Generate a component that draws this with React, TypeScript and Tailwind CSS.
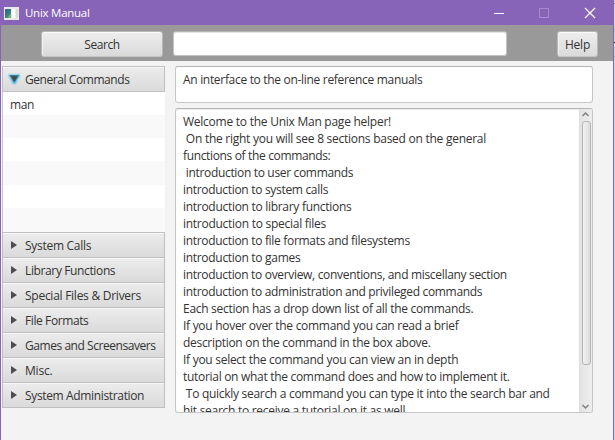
import React from "react";

const sections = [
  { name: "System Calls", tracking: "tracking-[-0.28px]" },
  { name: "Library Functions", tracking: "tracking-[-0.37px]" },
  { name: "Special Files & Drivers", tracking: "tracking-[-0.26px]" },
  { name: "File Formats", tracking: "tracking-[-0.4px]" },
  { name: "Games and Screensavers", tracking: "tracking-[-0.45px]" },
  { name: "Misc.", tracking: "tracking-[-0.2px]" },
  { name: "System Administration", tracking: "tracking-[-0.35px]" },
];

const lines = [
  { text: "Welcome to the Unix Man page helper!", tracking: "tracking-[-0.25px]" },
  { text: " On the right you will see 8 sections based on the general", tracking: "tracking-[-0.26px]" },
  { text: "functions of the commands:", tracking: "tracking-[-0.35px]" },
  { text: " introduction to user commands", tracking: "tracking-[-0.33px]" },
  { text: "introduction to system calls", tracking: "tracking-[-0.31px]" },
  { text: "introduction to library functions", tracking: "tracking-[-0.29px]" },
  { text: "introduction to special files", tracking: "tracking-[-0.27px]" },
  { text: "introduction to file formats and filesystems", tracking: "tracking-[-0.31px]" },
  { text: "introduction to games", tracking: "tracking-[-0.3px]" },
  { text: "introduction to overview, conventions, and miscellany section", tracking: "tracking-[-0.32px]" },
  { text: "introduction to administration and privileged commands", tracking: "tracking-[-0.32px]" },
  { text: "Each section has a drop down list of all the commands.", tracking: "tracking-[-0.29px]" },
  { text: "If you hover over the command you can read a brief", tracking: "tracking-[-0.29px]" },
  { text: "description on the command in the box above.", tracking: "tracking-[-0.3px]" },
  { text: "If you select the command you can view an in depth", tracking: "tracking-[-0.28px]" },
  { text: "tutorial on what the command does and how to implement it.", tracking: "tracking-[-0.3px]" },
  { text: " To quickly search a command you can type it into the search bar and", tracking: "tracking-[-0.29px]" },
  { text: "hit search to receive a tutorial on it as well.", tracking: "tracking-[-0.28px]" },
];

const buttonStyle =
  "flex h-[26px] items-center justify-center rounded-[3px] border border-[#b8b8b8] border-b-[#c5c5c5] bg-linear-to-b from-[#eeeeee] to-[#dadada] shadow-[inset_0_1px_0_#fafafa,inset_1px_0_0_#f2f2f2]";

function TitleBar() {
  return (
    <header className="flex h-[25px] shrink-0 items-center bg-[#8764b8] text-white">
      <svg className="ml-[3px] mt-px shrink-0" width="15" height="13" viewBox="0 0 15 13">
        <rect width="15" height="13" fill="#e9e9ed" />
        <rect x="1" y="2" width="6" height="9" fill="#37867c" />
        <path d="M1 2h6L2 8H1z" fill="#356d91" />
        <path d="M3 11l4-5v5z" fill="#75ad80" />
        <rect x="8" y="2" width="3" height="9" fill="#fff" />
        <rect x="12" y="2" width="2" height="9" fill="#d5dbd9" />
      </svg>
      <span className="ml-[6px] text-[11.5px] tracking-[-0.26px]">Unix Manual</span>
      <svg className="ml-auto mr-[16px]" width="104" height="12" viewBox="0 0 104 12" fill="none">
        <path d="M1 6.5h10" stroke="#fff" />
        <rect x="46.5" y="1.5" width="9" height="9" stroke="#a68bcf" />
        <path d="M92 1l10 10M102 1L92 11" stroke="#fff" strokeWidth="1.2" />
      </svg>
    </header>
  );
}

function Toolbar() {
  return (
    <div className="flex h-9 shrink-0 items-start bg-[#999999] pl-10 pt-[6px]">
      <button className={buttonStyle + " w-[122px]"}>
        <span className="tracking-[-0.45px]">Search</span>
      </button>
      <div className="ml-[10px] h-[25px] w-[334px] rounded-[3px] border border-[#c3c3c3] border-t-[#b5b5b5] bg-white shadow-[inset_0_1px_1px_#e4e4e4]" />
      <button className={buttonStyle + " ml-[50px] w-[41px]"}>
        <span className="tracking-[-0.2px]">Help</span>
      </button>
    </div>
  );
}

function SectionHeader({ name, tracking, open }: { name: string; tracking: string; open?: boolean }) {
  return (
    <div className="flex h-[26px] items-center border border-[#c0c0c0] bg-linear-to-b from-[#ececec] to-[#dadada] shadow-[inset_0_1px_0_#f8f8f8]">
      <svg className="ml-[4px] shrink-0 overflow-visible" width="16" height="18" viewBox="0 0 16 18">
        {open ? (
          <>
            <path d="M2.5 5.5h9.5l-4 7.5h-1.5z" fill="#7ad2ee" stroke="#7ad2ee" strokeWidth="4" strokeLinejoin="round" opacity="0.35" />
            <path d="M2.5 5.5h9.5l-4 7.5h-1.5z" fill="#54c2e4" stroke="#54c2e4" strokeWidth="2" strokeLinejoin="round" opacity="0.6" />
            <path d="M3 5.5h8.5L7.25 12.5z" fill="#4a4a4a" stroke="#1f86a6" strokeWidth="0.8" />
          </>
        ) : (
          <path d="M4 5v8l6-4z" fill="#4d4d4d" />
        )}
      </svg>
      <span className={"ml-[2px] whitespace-nowrap " + tracking}>{name}</span>
    </div>
  );
}

function Sidebar() {
  return (
    <nav className="ml-px w-[163px] shrink-0">
      <SectionHeader name="General Commands" tracking="tracking-[-0.43px]" open />
      <div className="h-[140px] border-l border-[#c8c8c8] bg-white">
        <div className="flex h-[23px] items-center pl-[7px] pt-[2px] tracking-[-0.4px]">man</div>
        <div className="h-[23px] bg-[#f9f9f9]" />
        <div className="h-[23px]" />
        <div className="h-[24px] bg-[#f9f9f9]" />
        <div className="h-[23px]" />
        <div className="h-[24px] bg-[#f9f9f9]" />
      </div>
      {sections.map((s) => (
        <div key={s.name} className="-mb-px">
          <SectionHeader {...s} />
        </div>
      ))}
    </nav>
  );
}

function Scrollbar() {
  return (
    <div className="flex w-[13px] shrink-0 flex-col items-center border-l border-[#dedede] bg-linear-to-r from-[#e3e3e3] to-[#eeeeee]">
      <svg width="12" height="12" viewBox="0 0 12 12" fill="none">
        <path d="M2.5 7L5.5 4l3 3" stroke="#808080" strokeWidth="1.5" />
      </svg>
      <div className="h-[244px] w-[9px] rounded-[3px] border border-[#b4b4b4] bg-linear-to-r from-[#f2f2f2] to-[#dcdcdc]" />
      <svg className="mt-auto" width="12" height="12" viewBox="0 0 12 12" fill="none">
        <path d="M2.5 5l3 3 3-3" stroke="#808080" strokeWidth="1.5" />
      </svg>
    </div>
  );
}

export default function App() {
  return (
    <div className="flex h-[440px] w-[615px] overflow-hidden bg-[#f3f3f3] font-['Open_Sans','Noto_Sans',sans-serif] text-[12px] leading-[17px] text-[#333333]">
      <div className="w-px shrink-0 bg-[#8764b8]" />
      <div className="flex w-[612px] shrink-0 flex-col">
        <TitleBar />
        <Toolbar />
        <main className="flex gap-[10px] pt-[5px]">
          <Sidebar />
          <section className="flex w-[418px] flex-col gap-[5px]">
            <div className="h-[37px] rounded-[3px] border border-[#c6c6c6] border-t-[#b5b5b5] bg-white pl-[7px] pt-[4px] tracking-[-0.31px]">
              An interface to the on-line reference manuals
            </div>
            <div className="flex h-[305px] overflow-hidden rounded-[3px] border border-[#c6c6c6] border-t-[#b5b5b5] bg-white shadow-[inset_0_1px_1px_#e9e9e9]">
              <div className="min-w-0 flex-1 pl-[7px] pt-[4px]">
                {lines.map((l) => (
                  <p key={l.text} className={"whitespace-pre " + l.tracking}>
                    {l.text}
                  </p>
                ))}
              </div>
              <Scrollbar />
            </div>
          </section>
        </main>
      </div>
      <div className="w-px shrink-0 bg-[#8764b8]" />
      <div className="flex w-px shrink-0 flex-col bg-[#d9d2e4]">
        <div className="mt-[3px] h-px bg-[#8d8699]" />
        <div className="mt-[25px] h-px bg-[#b3acbf]" />
        <div className="mt-[12px] h-px bg-[#222222]" />
        <div className="mt-[13px] h-px bg-[#b3acbf]" />
      </div>
    </div>
  );
}
